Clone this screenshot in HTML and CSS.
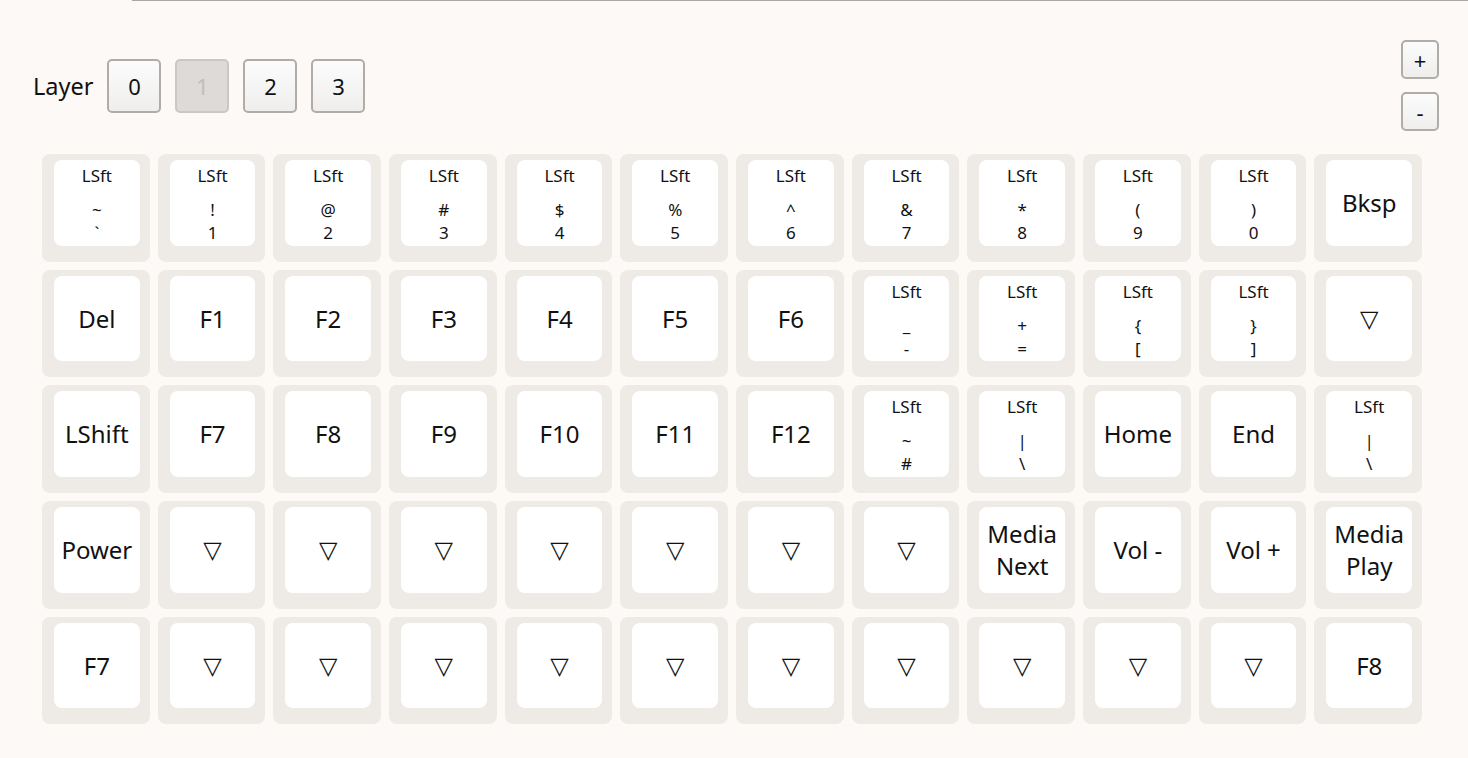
FILE: index.html
```html
<!DOCTYPE html>
<html lang="en">
<head>
<meta charset="utf-8">
<title>Keymap</title>
<link rel="stylesheet" href="styles.css">
</head>
<body>
<div class="topline"></div>
<div class="header">
  <div class="layers">
    <span class="layer-label">Layer</span>
    <button class="lbtn">0</button>
    <button class="lbtn" disabled>1</button>
    <button class="lbtn">2</button>
    <button class="lbtn">3</button>
  </div>
  <div class="zoom">
    <button class="zbtn">+</button>
    <button class="zbtn">-</button>
  </div>
</div>
<div class="board">
  <!-- row 1 -->
  <div class="key"><div class="cap mod"><div class="m">LSft</div><div class="lg">~<br>`</div></div></div>
  <div class="key"><div class="cap mod"><div class="m">LSft</div><div class="lg">!<br>1</div></div></div>
  <div class="key"><div class="cap mod"><div class="m">LSft</div><div class="lg">@<br>2</div></div></div>
  <div class="key"><div class="cap mod"><div class="m">LSft</div><div class="lg">#<br>3</div></div></div>
  <div class="key"><div class="cap mod"><div class="m">LSft</div><div class="lg">$<br>4</div></div></div>
  <div class="key"><div class="cap mod"><div class="m">LSft</div><div class="lg">%<br>5</div></div></div>
  <div class="key"><div class="cap mod"><div class="m">LSft</div><div class="lg">^<br>6</div></div></div>
  <div class="key"><div class="cap mod"><div class="m">LSft</div><div class="lg">&amp;<br>7</div></div></div>
  <div class="key"><div class="cap mod"><div class="m">LSft</div><div class="lg">*<br>8</div></div></div>
  <div class="key"><div class="cap mod"><div class="m">LSft</div><div class="lg">(<br>9</div></div></div>
  <div class="key"><div class="cap mod"><div class="m">LSft</div><div class="lg">)<br>0</div></div></div>
  <div class="key"><div class="cap">Bksp</div></div>
  <!-- row 2 -->
  <div class="key"><div class="cap">Del</div></div>
  <div class="key"><div class="cap">F1</div></div>
  <div class="key"><div class="cap">F2</div></div>
  <div class="key"><div class="cap">F3</div></div>
  <div class="key"><div class="cap">F4</div></div>
  <div class="key"><div class="cap">F5</div></div>
  <div class="key"><div class="cap">F6</div></div>
  <div class="key"><div class="cap mod"><div class="m">LSft</div><div class="lg">_<br>-</div></div></div>
  <div class="key"><div class="cap mod"><div class="m">LSft</div><div class="lg">+<br>=</div></div></div>
  <div class="key"><div class="cap mod"><div class="m">LSft</div><div class="lg">{<br>[</div></div></div>
  <div class="key"><div class="cap mod"><div class="m">LSft</div><div class="lg">}<br>]</div></div></div>
  <div class="key"><div class="cap tri">▽</div></div>
  <!-- row 3 -->
  <div class="key"><div class="cap">LShift</div></div>
  <div class="key"><div class="cap">F7</div></div>
  <div class="key"><div class="cap">F8</div></div>
  <div class="key"><div class="cap">F9</div></div>
  <div class="key"><div class="cap">F10</div></div>
  <div class="key"><div class="cap">F11</div></div>
  <div class="key"><div class="cap">F12</div></div>
  <div class="key"><div class="cap mod"><div class="m">LSft</div><div class="lg">~<br>#</div></div></div>
  <div class="key"><div class="cap mod"><div class="m">LSft</div><div class="lg">|<br>\</div></div></div>
  <div class="key"><div class="cap">Home</div></div>
  <div class="key"><div class="cap">End</div></div>
  <div class="key"><div class="cap mod"><div class="m">LSft</div><div class="lg">|<br>\</div></div></div>
  <!-- row 4 -->
  <div class="key"><div class="cap">Power</div></div>
  <div class="key"><div class="cap tri">▽</div></div>
  <div class="key"><div class="cap tri">▽</div></div>
  <div class="key"><div class="cap tri">▽</div></div>
  <div class="key"><div class="cap tri">▽</div></div>
  <div class="key"><div class="cap tri">▽</div></div>
  <div class="key"><div class="cap tri">▽</div></div>
  <div class="key"><div class="cap tri">▽</div></div>
  <div class="key"><div class="cap">Media<br>Next</div></div>
  <div class="key"><div class="cap">Vol -</div></div>
  <div class="key"><div class="cap">Vol +</div></div>
  <div class="key"><div class="cap">Media<br>Play</div></div>
  <!-- row 5 -->
  <div class="key"><div class="cap">F7</div></div>
  <div class="key"><div class="cap tri">▽</div></div>
  <div class="key"><div class="cap tri">▽</div></div>
  <div class="key"><div class="cap tri">▽</div></div>
  <div class="key"><div class="cap tri">▽</div></div>
  <div class="key"><div class="cap tri">▽</div></div>
  <div class="key"><div class="cap tri">▽</div></div>
  <div class="key"><div class="cap tri">▽</div></div>
  <div class="key"><div class="cap tri">▽</div></div>
  <div class="key"><div class="cap tri">▽</div></div>
  <div class="key"><div class="cap tri">▽</div></div>
  <div class="key"><div class="cap">F8</div></div>
</div>
</body>
</html>
```
FILE: styles.css
```css
html, body {
  margin: 0;
  padding: 0;
  background: #fdf9f6;
  font-family: "Noto Sans", "DejaVu Sans", sans-serif;
  color: #111;
}

.topline {
  margin-left: 132px;
  border-top: 1px solid #aaa7a3;
}

.header {
  display: flex;
  justify-content: space-between;
  align-items: center;
  padding: 39px 29px 0 33px;
}

.layers {
  display: flex;
  align-items: center;
  gap: 14px;
}

.layer-label {
  font-size: 23.5px;
  line-height: 30px;
}

.lbtn {
  width: 54px;
  height: 54px;
  box-sizing: border-box;
  border: 2px solid #b1aca8;
  border-radius: 5px;
  background: linear-gradient(#fcfcfc, #efeeed);
  font-family: "Noto Sans", sans-serif;
  font-size: 22px;
  color: #111;
  padding: 0;
}

.lbtn:disabled {
  background: #dddad8;
  border-color: #cbc7c4;
  color: #c2beba;
}

.zoom {
  display: flex;
  flex-direction: column;
  gap: 13px;
}

.zbtn {
  width: 38px;
  height: 39px;
  box-sizing: border-box;
  border: 2px solid #b1aca8;
  border-radius: 5px;
  background: linear-gradient(#fcfcfc, #efeeed);
  font-family: "Noto Sans", sans-serif;
  font-size: 22px;
  line-height: 1;
  color: #111;
  padding: 0;
}

.board {
  display: grid;
  grid-template-columns: repeat(12, 1fr);
  gap: 8px;
  width: 1380px;
  margin: 23px 0 0 42px;
}

.key {
  aspect-ratio: 1 / 1;
  box-sizing: border-box;
  padding: 6px 10px 16px 12px;
  background: #eeebe7;
  border-radius: 8px;
}

.cap {
  height: 100%;
  background: #fff;
  border-radius: 8px;
  display: flex;
  flex-direction: column;
  justify-content: center;
  align-items: center;
  text-align: center;
  font-size: 24px;
  line-height: 32px;
}

.cap.mod {
  justify-content: flex-start;
  padding-top: 5px;
  box-sizing: border-box;
  font-size: 17px;
}

.cap.mod .m {
  line-height: 22px;
}

.cap.mod .lg {
  margin-top: 11px;
  line-height: 23px;
}

.cap.tri {
  font-family: "DejaVu Sans", sans-serif;
  font-size: 24px;
}
```
